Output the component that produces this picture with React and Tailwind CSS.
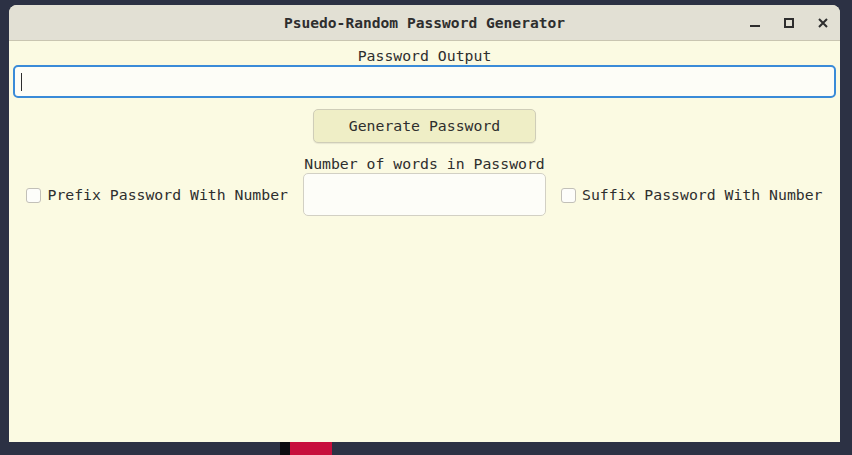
import React from "react";

const mono = { fontFamily: '"DejaVu Sans Mono", "Liberation Mono", monospace' };

export default function App() {
  return (
    <div className="relative w-[852px] h-[455px] overflow-hidden bg-[#2c3144] pt-[5px] pl-[9px]" style={mono}>
      <div className="w-[831px] h-[437px] flex flex-col rounded-t-[8px] overflow-hidden bg-[#fbfae2]">
        {/* Title bar */}
        <div className="relative h-[36px] shrink-0 flex items-center justify-center bg-[#e2e0d4] border-b border-[#c9c5b1]">
          <span className="text-[14.6px] font-bold text-[#2e2e2e]">Psuedo-Random Password Generator</span>
          <div className="absolute right-[10px] top-0 h-full flex items-center gap-[20px]">
            <div className="w-[14px] h-[14px] flex items-center justify-center">
              <svg width="12" height="12" viewBox="0 0 12 12"><rect x="1" y="8" width="10" height="2" fill="#2e2e2e" /></svg>
            </div>
            <div className="w-[14px] h-[14px] flex items-center justify-center">
              <svg width="12" height="12" viewBox="0 0 12 12"><rect x="2" y="2" width="8" height="8" fill="none" stroke="#2e2e2e" strokeWidth="2" /></svg>
            </div>
            <div className="w-[14px] h-[14px] flex items-center justify-center">
              <svg width="12" height="12" viewBox="0 0 12 12"><path d="M2 2 L10 10 M10 2 L2 10" stroke="#2e2e2e" strokeWidth="2" /></svg>
            </div>
          </div>
        </div>

        {/* Body */}
        <div className="flex flex-col items-center px-[4px] pt-[4px] text-[14.8px] text-[#2e2e2e]">
          <div className="h-[20px] leading-[20px] pt-[1px]">Password Output</div>
          <div className="w-full h-[33px] rounded-[5px] border-2 border-[#3a8bd8] bg-[#fdfdf7] flex items-center pl-[6px]">
            <div className="w-[1px] h-[18px] bg-[#2e2e2e]" />
          </div>

          <button className="mt-[11px] w-[223px] h-[34px] rounded-[5px] border border-[#cfcdb8] bg-[#efeec6] text-[14.8px] text-[#2e2e2e] shadow-[0_1px_1px_rgba(0,0,0,0.08)]" style={mono}>
            Generate Password
          </button>

          <div className="mt-[10px] flex justify-center items-end gap-[15px]">
            <label className="h-[42px] flex items-center gap-[6px]">
              <span className="w-[15px] h-[15px] rounded-[3px] border border-[#c2c0b8] bg-[#fdfdfa]" />
              <span>Prefix Password With Number</span>
            </label>
            <div className="flex flex-col items-center">
              <div className="h-[20px] leading-[20px] pt-[1px]">Number of words in Password</div>
              <div className="w-[243px] h-[43px] rounded-[5px] border border-[#d2d0c4] bg-[#fdfdf8]" />
            </div>
            <label className="h-[42px] flex items-center gap-[6px]">
              <span className="w-[15px] h-[15px] rounded-[3px] border border-[#c2c0b8] bg-[#fdfdfa]" />
              <span>Suffix Password With Number</span>
            </label>
          </div>
        </div>
      </div>
      <div className="absolute left-[280px] top-[442px] w-[10px] h-[13px] bg-[#0c0c10]" />
      <div className="absolute left-[290px] top-[442px] w-[42px] h-[13px] bg-[#c70f3c]" />
    </div>
  );
}
